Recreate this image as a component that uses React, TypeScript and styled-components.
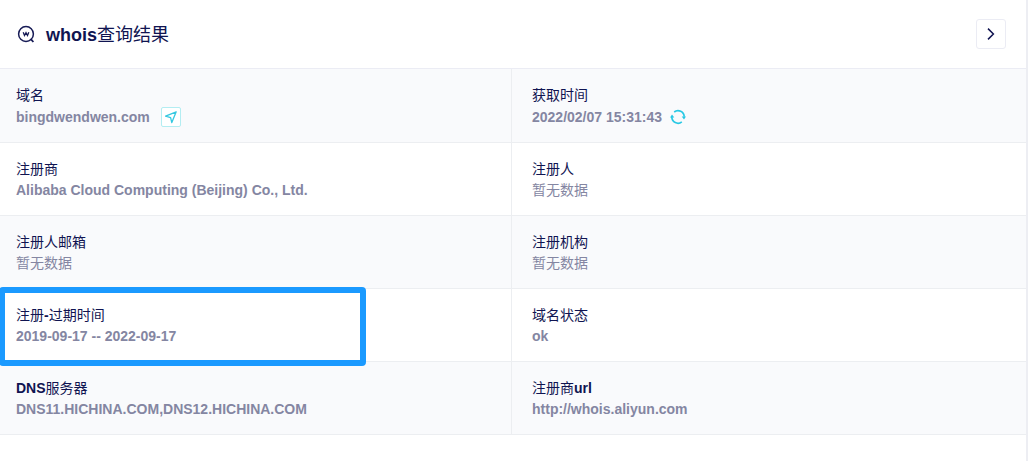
import React from "react";
import styled, { createGlobalStyle } from "styled-components";

const GlobalStyle = createGlobalStyle`
  *, *::before, *::after { box-sizing: border-box; }
  body {
    margin: 0;
    background: #fff;
    color: #101451;
    font-family: "Liberation Sans", "Noto Sans CJK SC", sans-serif;
    font-size: 14px;
  }
`;

const Panel = styled.main`
  min-height: 100vh;
  background: #fff;
  border-right: 2px solid #edeef3;
  overflow: hidden;
`;

const Header = styled.header`
  display: flex;
  align-items: center;
  gap: 10px;
  height: 69px;
  padding: 0 20px 0 16px;
  border-bottom: 1px solid #ebecf4;
`;

const Title = styled.h1`
  flex: 1;
  margin: 0;
  padding-top: 2px;
  font-size: 18px;
  line-height: 28px;
  font-weight: 400;
`;

const Strong = styled.span`
  font-weight: 700;
`;

const NextButton = styled.button`
  display: flex;
  align-items: center;
  justify-content: center;
  width: 30px;
  height: 30px;
  padding: 0;
  border: 1px solid #ebecf4;
  border-radius: 3px;
  background: #fff;
  color: #101451;
  cursor: pointer;
`;

const Row = styled.dl`
  display: grid;
  grid-template-columns: 512fr 514fr;
  margin: 0;
  border-bottom: 1px solid #eceef1;
  &:nth-of-type(odd) { background: #f9fafc; }
`;

const Cell = styled.div`
  position: relative;
  padding: 16px 16px 14px;
  & + & { padding-left: 20px; }
  &:first-child { border-right: 1px solid #eceef1; }
`;

const Label = styled.dt`
  line-height: 21px;
`;

const Value = styled.dd`
  display: flex;
  align-items: center;
  min-height: 21px;
  margin: 0;
  line-height: 21px;
  color: #8486a2;
`;

const VisitLink = styled.a`
  display: flex;
  align-items: center;
  justify-content: center;
  width: 20px;
  height: 20px;
  margin: 1px 0 1px 11px;
  border: 1px solid #b3edf2;
  border-radius: 2px;
  background: #fff;
  color: #35c8e0;
`;

const RefreshButton = styled.button`
  display: flex;
  align-items: center;
  height: 22px;
  margin-left: 8px;
  padding: 0;
  border: 0;
  background: none;
  color: #28c8e4;
  cursor: pointer;
`;

const Highlight = styled.div`
  position: absolute;
  z-index: 1;
  top: -2px;
  bottom: -5px;
  left: -1px;
  width: 367px;
  border: 6px solid #1b9aff;
  border-radius: 4px;
  pointer-events: none;
`;

const Mixed = ({ text }: { text: string }) => (
  <span>
    {text
      .split(/([\x20-\x7e]+)/)
      .filter(Boolean)
      .map((s, i) => (/[\x20-\x7e]/.test(s) ? <Strong key={i}>{s}</Strong> : s))}
  </span>
);

const WhoisIcon = () => (
  <svg width="20" height="20" viewBox="0 0 20 20" fill="none" stroke="#171b56" aria-hidden="true">
    <circle cx="10" cy="10" r="7.4" strokeWidth="1.5" />
    <path d="M14.6 14.8l2.8 3.2" strokeWidth="1.8" />
    <path d="M7.2 8.2l1.3 3.3L10 8.6l1.5 2.9 1.3-3.3" strokeWidth="1.3" />
  </svg>
);

const ChevronIcon = () => (
  <svg width="10" height="12" viewBox="0 0 10 12" fill="none" stroke="currentColor" aria-hidden="true">
    <path d="M2 .6L7.4 6 2 11.4" strokeWidth="1.5" />
  </svg>
);

const SendIcon = () => (
  <svg width="14" height="14" viewBox="0 0 14 14" fill="none" stroke="currentColor" aria-hidden="true">
    <path d="M12.2 1.8L1.6 6.2l5 1.4 1.2 5z" strokeWidth="1.3" strokeLinejoin="round" />
  </svg>
);

const RefreshIcon = () => (
  <svg width="16" height="16" viewBox="0 0 16 16" fill="none" stroke="currentColor" aria-hidden="true">
    <path d="M4.2 3a6.2 6.2 0 0 1 10 4.8M11.8 12.9a6.2 6.2 0 0 1-10-4.8" strokeWidth="1.7" />
    <path d="M11.7 7.4h4.3l-2 3.2zM0 8.6h4.3l-2.3-3.2z" fill="currentColor" stroke="none" />
  </svg>
);

type Field = { label: string; value: string; action?: React.ReactNode; marked?: boolean };

const rows: Field[][] = [
  [
    {
      label: "域名",
      value: "bingdwendwen.com",
      action: (
        <VisitLink href="#visit" aria-label="bingdwendwen.com">
          <SendIcon />
        </VisitLink>
      ),
    },
    {
      label: "获取时间",
      value: "2022/02/07 15:31:43",
      action: (
        <RefreshButton type="button" aria-label="刷新">
          <RefreshIcon />
        </RefreshButton>
      ),
    },
  ],
  [
    { label: "注册商", value: "Alibaba Cloud Computing (Beijing) Co., Ltd." },
    { label: "注册人", value: "暂无数据" },
  ],
  [
    { label: "注册人邮箱", value: "暂无数据" },
    { label: "注册机构", value: "暂无数据" },
  ],
  [
    { label: "注册-过期时间", value: "2019-09-17 -- 2022-09-17", marked: true },
    { label: "域名状态", value: "ok" },
  ],
  [
    { label: "DNS服务器", value: "DNS11.HICHINA.COM,DNS12.HICHINA.COM" },
    { label: "注册商url", value: "http://whois.aliyun.com" },
  ],
];

export default function App() {
  return (
    <>
      <GlobalStyle />
      <Panel>
        <Header>
          <WhoisIcon />
          <Title>
            <Mixed text="whois查询结果" />
          </Title>
          <NextButton type="button" aria-label="下一页">
            <ChevronIcon />
          </NextButton>
        </Header>
        {rows.map((fields, i) => (
          <Row key={i}>
            {fields.map((f) => (
              <Cell key={f.label}>
                <Label>
                  <Mixed text={f.label} />
                </Label>
                <Value>
                  <Mixed text={f.value} />
                  {f.action}
                </Value>
                {f.marked && <Highlight />}
              </Cell>
            ))}
          </Row>
        ))}
      </Panel>
    </>
  );
}
